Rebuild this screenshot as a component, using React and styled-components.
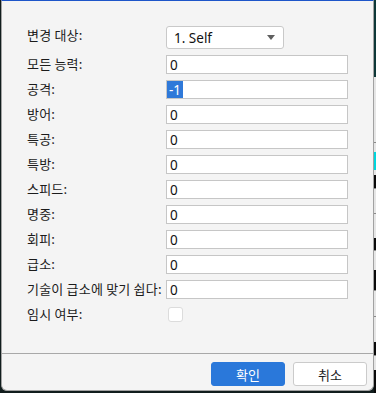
import React from 'react'
import styled, { createGlobalStyle } from 'styled-components'

const Global = createGlobalStyle`
  html, body {
    margin: 0;
    padding: 0;
    background: #0f3232;
  }
  * { box-sizing: border-box; }
`

const Page = styled.div`
  display: flex;
  width: 376px;
  height: 393px;
  background: #111d1d;
  overflow: hidden;
`

const Dialog = styled.div`
  display: flex;
  flex-direction: column;
  width: 373px;
  height: 391px;
  margin-left: 1px;
  background: #f4f4f4;
  border: 1px solid #a2a2a2;
  border-top: 1px solid #1d55c9;
  border-radius: 0 0 6px 6px;
`

const Strip = styled.div`
  flex: 1;
  display: flex;
  flex-direction: column;
`

const Block = styled.div`
  height: ${p => p.h}px;
  background: ${p => p.c};
  border-top: ${p => (p.line ? '1px solid #8a8a8a' : 'none')};
`

const Form = styled.div`
  flex: 1;
  display: grid;
  grid-template-columns: 139px 182px;
  grid-template-rows: 23px;
  grid-auto-rows: 19px;
  row-gap: 6px;
  align-content: start;
  padding: 25px 0 0 25px;
`

const Label = styled.div`
  font-family: "Noto Sans CJK KR", "Noto Sans", sans-serif;
  font-size: 13px;
  letter-spacing: 0.2px;
  line-height: 16px;
  color: #1b1b1b;
  white-space: nowrap;
  align-self: ${p => (p.top ? 'start' : 'center')};
  padding-top: ${p => (p.top ? 3 : 0)}px;
  margin-top: -2px;
`

const Select = styled.div`
  width: 118px;
  height: 23px;
  display: flex;
  align-items: center;
  justify-content: space-between;
  padding: 0 8px 0 7px;
  background: #fff;
  border: 1px solid #c9c9c9;
  border-radius: 3px;
  font-family: "Noto Sans", "Open Sans", sans-serif;
  font-size: 13.5px;
  color: #111;
`

const Caret = styled.span`
  width: 0;
  height: 0;
  border-left: 4.5px solid transparent;
  border-right: 4.5px solid transparent;
  border-top: 5px solid #5f5f5f;
`

const Input = styled.div`
  height: 19px;
  display: flex;
  align-items: center;
  padding-left: 3px;
  background: #fff;
  border: 1px solid #c6c6c6;
  font-family: "Noto Sans", "Open Sans", sans-serif;
  font-size: 13.5px;
  color: #111;
`

const Selected = styled.span`
  display: flex;
  align-items: center;
  height: 17px;
  margin-left: -3px;
  padding: 0 2px;
  background: #2f79d9;
  color: #fff;
`

const Check = styled.div`
  width: 15px;
  height: 15px;
  margin: 2px 0 0 2px;
  background: #fff;
  border: 1px solid #dcdcdc;
  border-radius: 3px;
`

const Footer = styled.div`
  height: 37px;
  display: flex;
  justify-content: flex-end;
  align-items: flex-start;
  gap: 8px;
  padding: 8px 6px 0 0;
  border-top: 1px solid #a8a8a8;
`

const Button = styled.button`
  width: 74px;
  height: 24px;
  padding: 0;
  border-radius: 3px;
  font-family: "Noto Sans CJK KR", sans-serif;
  font-size: 13px;
  border: 1px solid ${p => (p.primary ? '#2a78da' : '#cbcbcb')};
  background: ${p => (p.primary ? '#2a78da' : '#fff')};
  color: ${p => (p.primary ? '#fff' : '#1b1b1b')};
`

const stats = ['모든 능력:', '공격:', '방어:', '특공:', '특방:', '스피드:', '명중:', '회피:', '급소:', '기술이 급소에 맞기 쉽다:']

const strip = [
  { h: 77, c: '#0e3838' },
  { h: 65, c: '#e6e6e6' },
  { h: 10, c: '#e6e6e6', line: true },
  { h: 18, c: '#00d6dd' },
  { h: 5, c: '#e6e6e6' },
  { h: 13, c: '#0a0a0a' },
  { h: 25, c: '#e6e6e6', line: true },
  { h: 25, c: '#e6e6e6', line: true },
  { h: 12, c: '#0a0a0a' },
  { h: 20, c: '#e6e6e6', line: true },
  { h: 20, c: '#0a0a0a' },
  { h: 26, c: '#e6e6e6', line: true },
  { h: 26, c: '#e6e6e6', line: true },
  { h: 13, c: '#0a0a0a' },
  { h: 15, c: '#e6e6e6', line: true },
  { h: 23, c: '#0a0a0a' },
]

export default function App() {
  return (
    <Page>
      <Global />
      <Dialog>
        <Form>
          <Label top>변경 대상:</Label>
          <Select>
            <span>1. Self</span>
            <Caret />
          </Select>
          {stats.map((s, i) => (
            <React.Fragment key={s}>
              <Label>{s}</Label>
              <Input>{i === 1 ? <Selected>-1</Selected> : '0'}</Input>
            </React.Fragment>
          ))}
          <Label>임시 여부:</Label>
          <Check />
        </Form>
        <Footer>
          <Button primary>확인</Button>
          <Button>취소</Button>
        </Footer>
      </Dialog>
      <Strip>
        {strip.map((b, i) => (
          <Block key={i} h={b.h} c={b.c} line={b.line} />
        ))}
      </Strip>
    </Page>
  )
}
